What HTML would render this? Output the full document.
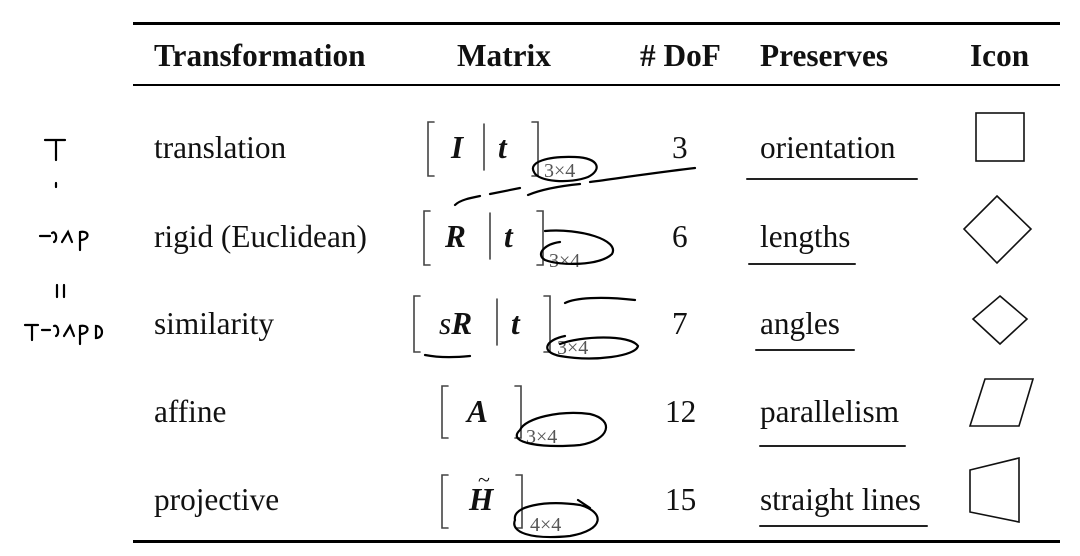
<!DOCTYPE html>
<html><head><style>
body{margin:0;width:1080px;height:556px;background:#fff;overflow:hidden;position:relative;font-family:"Liberation Serif",serif;color:#111}
.t{position:absolute;font-size:31.3px;white-space:nowrap;line-height:1}
.h{font-weight:bold}
.m{font-style:italic;font-weight:bold}
.s{position:absolute;font-size:20px;color:#555;line-height:1}
</style></head><body>
<div style="position:absolute;left:133px;top:22px;width:927px;height:3px;background:#000"></div>
<div style="position:absolute;left:133px;top:84px;width:927px;height:2px;background:#000"></div>
<div style="position:absolute;left:133px;top:540px;width:927px;height:3px;background:#000"></div>

<div class="t h" style="left:154px;top:40px">Transformation</div>
<div class="t h" style="left:457px;top:40px">Matrix</div>
<div class="t h" style="left:640px;top:40px"># DoF</div>
<div class="t h" style="left:760px;top:40px">Preserves</div>
<div class="t h" style="left:970px;top:40px">Icon</div>

<div class="t" style="left:154px;top:132px">translation</div>
<div class="t" style="left:154px;top:221px">rigid (Euclidean)</div>
<div class="t" style="left:154px;top:308px">similarity</div>
<div class="t" style="left:154px;top:396px">affine</div>
<div class="t" style="left:154px;top:484px">projective</div>

<div class="t" style="left:672px;top:132px">3</div>
<div class="t" style="left:672px;top:221px">6</div>
<div class="t" style="left:672px;top:308px">7</div>
<div class="t" style="left:665px;top:396px">12</div>
<div class="t" style="left:665px;top:484px">15</div>

<div class="t" style="left:760px;top:132px">orientation</div>
<div class="t" style="left:760px;top:221px">lengths</div>
<div class="t" style="left:760px;top:308px">angles</div>
<div class="t" style="left:760px;top:396px">parallelism</div>
<div class="t" style="left:760px;top:484px">straight lines</div>

<div class="t m" style="left:451px;top:132px">I</div>
<div class="t m" style="left:498px;top:132px">t</div>
<div class="t m" style="left:445px;top:221px">R</div>
<div class="t m" style="left:504px;top:221px">t</div>
<div class="t" style="left:439px;top:308px"><i>s</i><b><i>R</i></b></div>
<div class="t m" style="left:511px;top:308px">t</div>
<div class="t m" style="left:467px;top:396px">A</div>
<div class="t m" style="left:469px;top:484px">H</div>
<div class="t" style="left:478px;top:469px;font-size:22px">~</div>
<div class="s" style="left:544px;top:161px">3×4</div>
<div class="s" style="left:549px;top:251px">3×4</div>
<div class="s" style="left:557px;top:338px">3×4</div>
<div class="s" style="left:526px;top:427px">3×4</div>
<div class="s" style="left:530px;top:515px">4×4</div>

<svg style="position:absolute;left:0;top:0" width="1080" height="556" fill="none" stroke-linecap="round">
<g stroke="#444" stroke-width="1.6">
<path d="M434 122H428V176H434M532 122H538V176H532M484 124V170"/>
<path d="M430 211H424V265H430M537 211H543V265H537M490 213V259"/>
<path d="M420 296H414V352H420M544 296H550V352H544M497 299V345"/>
<path d="M448 386H442V438H448M515 386H521V438H515"/>
<path d="M448 475H442V528H448M516 475H522V528H516"/>
</g>
<g stroke="#222" stroke-width="2">
<path d="M747 179H917M749 264H855M756 350H854M760 446H905M760 526H927"/>
</g>
<g stroke="#111" stroke-width="1.6">
<rect x="976" y="113" width="48" height="48"/>
<path d="M997 196L1031 229L997 263L964 229Z"/>
<path d="M1000 296L1027 319L1000 344L973 319Z"/>
<path d="M985 379H1033L1019 426H970Z"/>
<path d="M970 470L1019 458V522L970 512Z"/>
</g>
<g stroke="#000" stroke-width="2.2">
<path d="M534 172C528 162 548 156 575 157C600 158 602 170 588 177C570 184 538 182 534 172Z"/>
<path d="M545 231C580 228 620 240 612 254C600 266 560 266 545 260C535 254 545 244 560 242"/>
<path d="M560 344C580 336 630 334 638 346C636 356 595 362 560 356C540 352 545 340 565 336"/>
<path d="M520 430C525 418 560 410 590 414C615 420 610 440 580 445C545 448 505 444 520 430"/>
<path d="M515 520C512 506 545 500 580 505C605 512 605 530 570 536C530 540 510 532 515 520M590 508L578 500"/>
<path d="M455 205C460 200 470 198 480 196M490 194C500 192 510 190 520 188M528 195C540 190 560 186 580 184M590 182C620 178 660 172 695 168"/>
<path d="M565 303C575 298 600 296 635 300M425 355C435 357 450 358 470 356"/>
<path d="M45 140H65M56 140V160M56 183V187"/>
<path d="M40 236H50M52 233C56 230 58 240 54 242M62 242L68 232L72 242M80 232V250M80 232C90 230 90 240 80 240"/>
<path d="M57 285V297M64 285V297"/>
<path d="M25 325H38M32 325V340M42 330H50M54 326C58 324 60 334 56 336M64 336L70 326L74 336M80 326V344M80 326C90 324 90 334 80 334M96 326C104 326 104 338 96 338Z"/>
</g>
</svg>
</body></html>
